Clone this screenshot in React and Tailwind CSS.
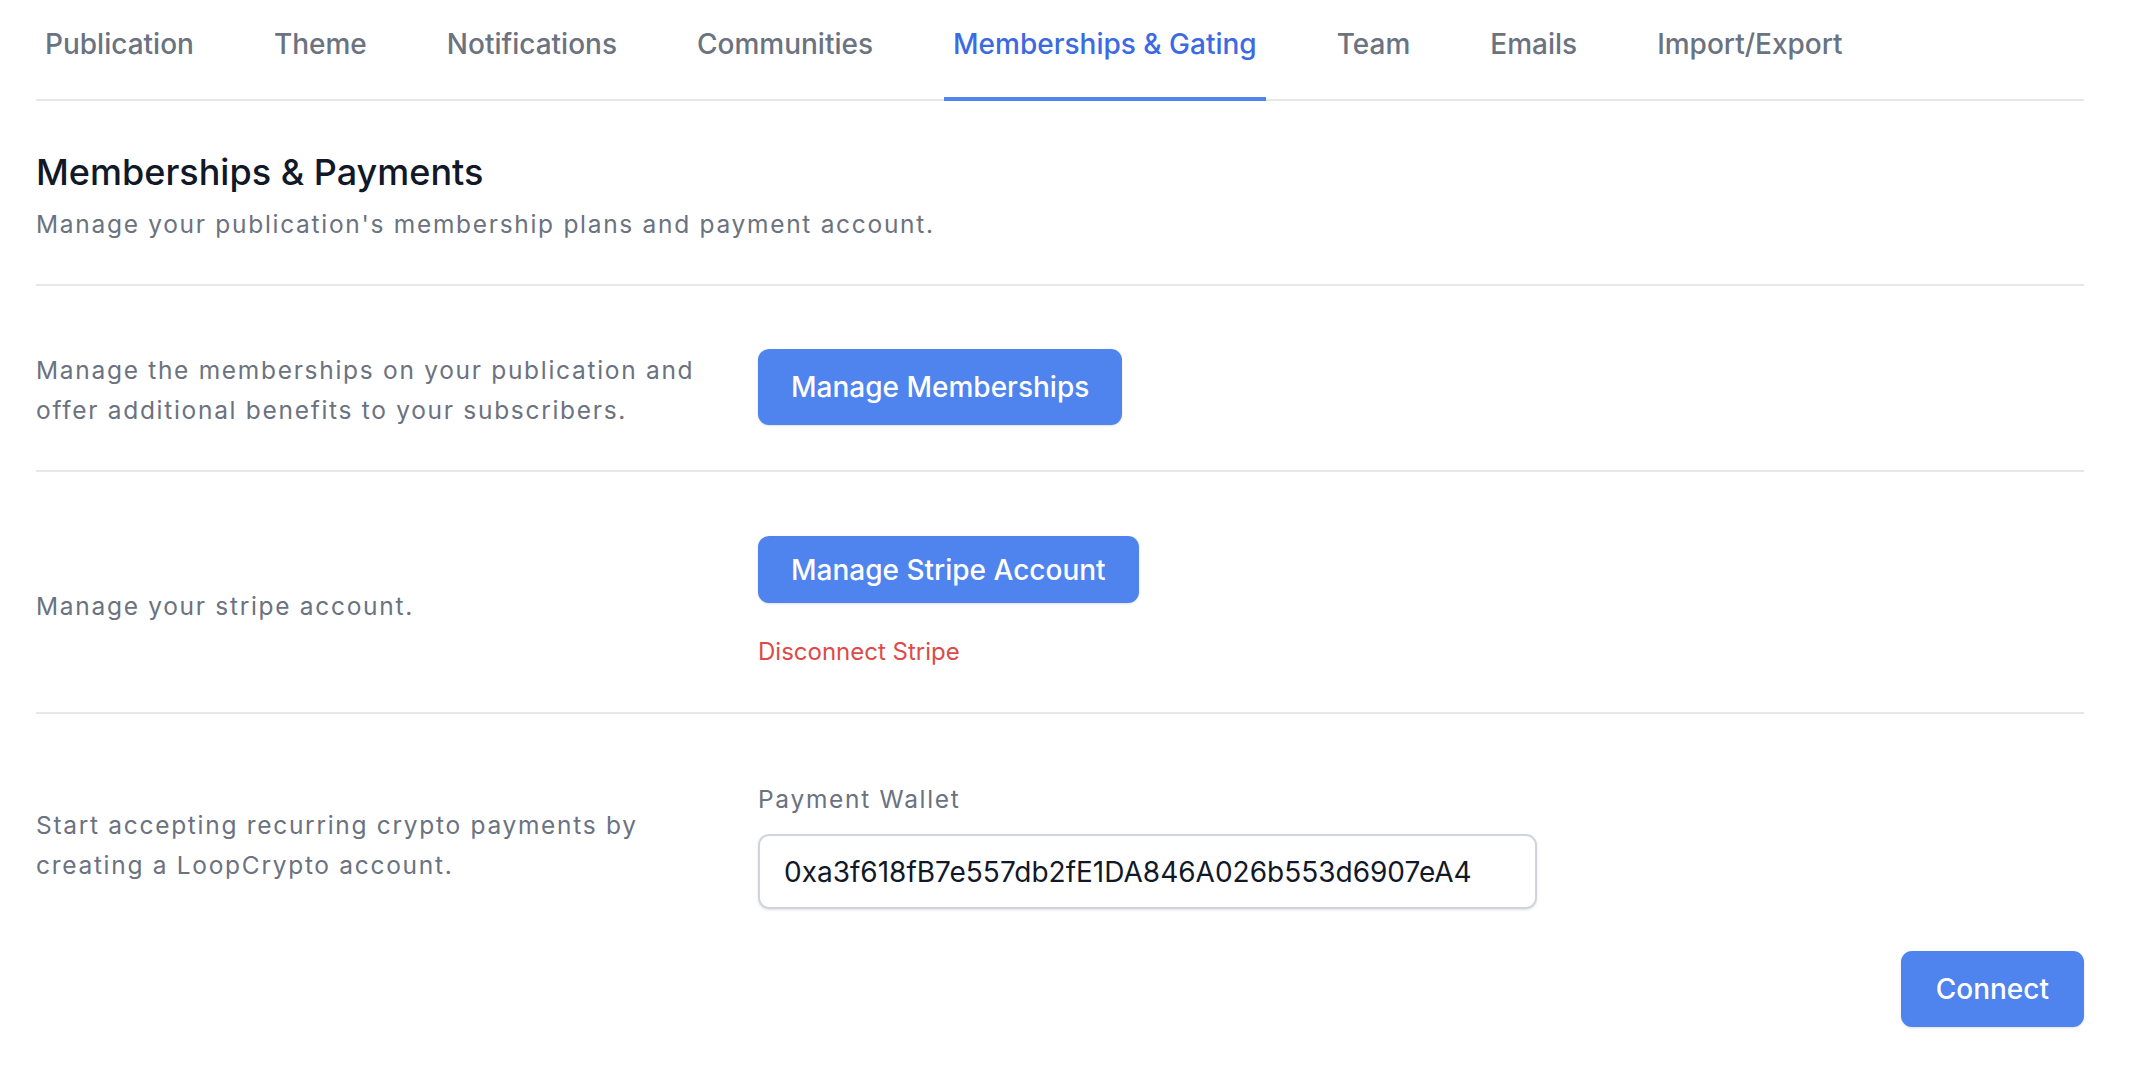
import React from "react";

const tabs = [
  "Publication",
  "Theme",
  "Notifications",
  "Communities",
  "Memberships & Gating",
  "Team",
  "Emails",
  "Import/Export",
];

const Tabs = ({ active }) => (
  <div className="flex gap-[62px] border-b-2 border-[#e5e7eb]">
    {tabs.map((t) => (
      <div
        key={t}
        className={
          t === active
            ? "-mb-[2px] px-[9px] pt-[23px] pb-[32px] border-b-4 border-[#4f83ee] text-[#3b6ae3] text-[28px] leading-[42px] font-medium"
            : "-mb-[2px] px-[9px] pt-[23px] pb-[32px] border-b-4 border-transparent text-[#6b7280] text-[28px] leading-[42px] font-medium"
        }
      >
        {t}
      </div>
    ))}
  </div>
);

const Button = ({ children, size }) => {
  let cls = "px-[33px] py-[17px]";
  if (size === "sm") cls = "px-[33px] py-[12.5px]";
  if (size === "wide") cls = "px-[35px] py-[17px]";
  return (
    <button
      className={
        cls +
        " rounded-[11px] bg-[#4f83ee] text-white text-[28px] leading-[42px] font-medium shadow-sm"
      }
    >
      {children}
    </button>
  );
};

export default function App() {
  return (
    <div
      className="min-h-screen bg-white pl-[36px] pr-[56px]"
      style={{ fontFamily: "Inter, 'Noto Sans', sans-serif" }}
    >
      <Tabs active="Memberships & Gating" />

      <div className="pt-[47px] pb-[42px] border-b-2 border-[#e5e7eb]">
        <h2 className="text-[36px] leading-[49px] font-medium text-[#111827]">
          Memberships &amp; Payments
        </h2>
        <p className="mt-[10px] text-[24.5px] leading-[35px] tracking-[1.7px] text-[#6b7280]">
          Manage your publication's membership plans and payment account.
        </p>
      </div>

      <div className="flex items-center pt-[57px] pb-[40px] border-b-2 border-[#e5e7eb]">
        <div className="w-[722px] pr-[40px] pt-[8px] text-[24.5px] leading-[39.5px] tracking-[1.7px] text-[#6b7280]">
          Manage the memberships on your publication and offer additional
          benefits to your subscribers.
        </div>
        <div className="flex-1">
          <Button>Manage Memberships</Button>
        </div>
      </div>

      <div className="flex items-center pt-[64px] pb-[40px] border-b-2 border-[#e5e7eb]">
        <div className="w-[722px] pr-[40px] pt-[6px] text-[24.5px] leading-[39.5px] tracking-[1.7px] text-[#6b7280]">
          Manage your stripe account.
        </div>
        <div className="flex-1 flex flex-col items-start">
          <Button size="sm">Manage Stripe Account</Button>
          <button className="mt-[29px] text-[24px] leading-[40px] text-[#dc4b48]">
            Disconnect Stripe
          </button>
        </div>
      </div>

      <div className="flex items-center pt-[68px]">
        <div className="w-[722px] pr-[40px] text-[24.5px] leading-[39.5px] tracking-[1.7px] text-[#6b7280]">
          Start accepting recurring crypto payments by creating a LoopCrypto
          account.
        </div>
        <div className="flex-1">
          <label className="block text-[24.5px] leading-[35px] tracking-[1.7px] text-[#6b7280]">
            Payment Wallet
          </label>
          <input
            className="mt-[17px] block w-[779px] h-[75px] px-[24px] rounded-[11px] border-2 border-[#d1d5db] text-[28px] text-[#111827] shadow-sm outline-none"
            defaultValue="0xa3f618fB7e557db2fE1DA846A026b553d6907eA4"
          />
        </div>
      </div>

      <div className="flex justify-end mt-[42px]">
        <Button size="wide">Connect</Button>
      </div>
    </div>
  );
}
